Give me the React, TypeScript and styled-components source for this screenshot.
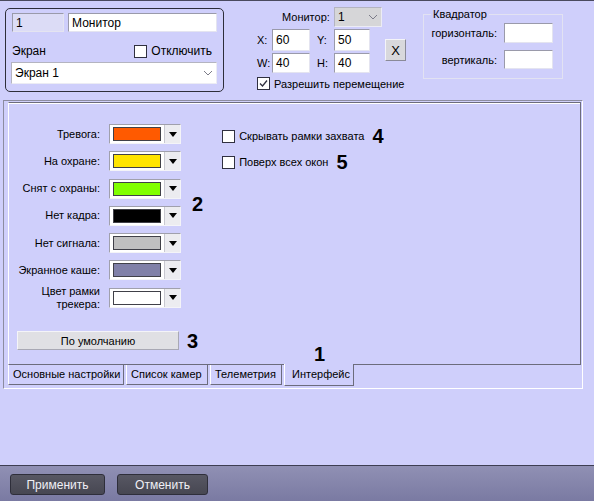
import styled, { createGlobalStyle } from "styled-components";

const GlobalStyle = createGlobalStyle`
  html, body {
    margin: 0;
    padding: 0;
  }
  body {
    font-family: "Liberation Sans", Arial, sans-serif;
    font-size: 11px;
    color: #000;
    background: #cfcffb;
  }
`;

const Screen = styled.div`
  height: 501px;
  display: flex;
  flex-direction: column;
  background: #cfcffb;
  border-top: 1px solid #4a4a5e;
  box-sizing: border-box;
`;

const Header = styled.div`
  height: 99px;
  display: flex;
  align-items: flex-start;
  flex-shrink: 0;
`;

const MonitorGroup = styled.div`
  box-sizing: border-box;
  margin: 7px 0 0 5px;
  width: 219px;
  height: 84px;
  border: 1px solid #2e2e3a;
  border-radius: 5px;
  padding: 4px 6px;
  display: flex;
  flex-direction: column;
`;

const Row = styled.div<{ $gap?: number; $top?: number }>`
  display: flex;
  align-items: center;
  gap: ${(p) => p.$gap ?? 0}px;
  margin-top: ${(p) => p.$top ?? 0}px;
  white-space: nowrap;
`;

const Field = styled.div<{ $w: number; $h?: number; $bg?: string }>`
  box-sizing: border-box;
  width: ${(p) => p.$w}px;
  height: ${(p) => p.$h ?? 20}px;
  background: ${(p) => p.$bg ?? "#fff"};
  border: 1px solid;
  border-color: #9a9aaa #e4e4f0 #e4e4f0 #9a9aaa;
  padding: 0 3px;
  display: flex;
  align-items: center;
  line-height: 1;
  font-size: 12px;
`;

const SelectBox = styled.div<{ $w: number; $h: number; $bg: string }>`
  box-sizing: border-box;
  width: ${(p) => p.$w}px;
  height: ${(p) => p.$h}px;
  background: ${(p) => p.$bg};
  border: 1px solid;
  border-color: #b4b4c0 #ececf4 #ececf4 #b4b4c0;
  display: flex;
  align-items: center;
  justify-content: space-between;
  padding-left: 3px;
  font-size: 12px;
`;

const Chevron = styled.span`
  width: 16px;
  height: 100%;
  display: flex;
  align-items: center;
  justify-content: center;
`;

const Label = styled.span<{ $w?: number; $align?: string }>`
  display: inline-block;
  width: ${(p) => (p.$w ? `${p.$w}px` : "auto")};
  text-align: ${(p) => p.$align ?? "left"};
  white-space: nowrap;
`;

const CheckLine = styled.label`
  display: flex;
  align-items: center;
  gap: 4px;
  white-space: nowrap;
`;

const Box = styled.span`
  box-sizing: border-box;
  width: 13px;
  height: 13px;
  background: #fff;
  border: 1px solid #303040;
  display: inline-flex;
  align-items: center;
  justify-content: center;
`;

const Middle = styled.div`
  margin: 6px 0 0 33px;
  display: flex;
  align-items: flex-start;
`;

const Coords = styled.div`
  width: 125px;
  display: flex;
  flex-direction: column;
`;

const ClearButton = styled.div`
  box-sizing: border-box;
  margin: 32px 0 0 3px;
  width: 21px;
  height: 22px;
  background: #d8d8dc;
  border: 1px solid;
  border-color: #f4f4f8 #8a8a98 #8a8a98 #f4f4f8;
  display: flex;
  align-items: center;
  justify-content: center;
  font-size: 13px;
`;

const Quad = styled.fieldset`
  margin: 6px 0 0 17px;
  width: 140px;
  box-sizing: border-box;
  border: 1px solid #e2e2f2;
  padding: 2px 9px 9px 0;
  display: flex;
  flex-direction: column;
  gap: 7px;

  legend {
    margin-left: 7px;
    padding: 0 2px;
    line-height: 14px;
  }
`;

const Frame = styled.div`
  margin: 0 11px 0 3px;
  height: 289px;
  box-sizing: border-box;
  border: 1px solid;
  border-color: #8c8ca0 #fff #fff #8c8ca0;
  padding: 1px 1px 2px 4px;
  display: flex;
  flex-direction: column;
  flex-shrink: 0;
`;

const TabPage = styled.div`
  position: relative;
  height: 264px;
  box-sizing: border-box;
  border: 1px solid #6c6c7c;
  border-left-color: #fff;
  box-shadow: inset 0 1px 0 #fff;
  display: flex;
  flex-direction: column;
`;

const Upper = styled.div`
  display: flex;
  align-items: flex-start;
  padding-top: 21px;
`;

const ColorGrid = styled.div`
  display: grid;
  grid-template-columns: 91px 72px;
  column-gap: 9px;
  row-gap: 7.3px;
  grid-auto-rows: 20px;
  align-items: center;
`;

const ColorLabel = styled.span`
  text-align: right;
  line-height: 13px;
`;

const Combo = styled.div`
  box-sizing: border-box;
  height: 20px;
  display: flex;
  border: 1px solid;
  border-color: #a0a0ac #f4f4f8 #f4f4f8 #a0a0ac;
  background: #fff;
`;

const Swatch = styled.div<{ $color: string }>`
  flex: 1;
  margin: 2px 3px 2px 3px;
  background: ${(p) => p.$color};
  border: 1px solid #404048;
`;

const ArrowButton = styled.div`
  width: 15px;
  background: #ececf0;
  border-left: 1px solid #c8c8d0;
  display: flex;
  align-items: center;
  justify-content: center;
`;

const Marker = styled.span<{ $left?: number; $top?: number }>`
  font-weight: bold;
  font-size: 20px;
  line-height: 20px;
  margin-left: ${(p) => p.$left ?? 0}px;
  margin-top: ${(p) => p.$top ?? 0}px;
`;

const FloatingMarker = styled(Marker)`
  position: absolute;
  left: 305px;
  top: 241px;
`;

const Options = styled.div`
  margin: 2px 0 0 19px;
  display: flex;
  flex-direction: column;
  gap: 6px;
`;

const OptionRow = styled.div`
  height: 20px;
  display: flex;
  align-items: center;
  gap: 8px;
`;

const DefaultsRow = styled.div`
  display: flex;
  align-items: center;
  gap: 8px;
  margin: 23px 0 0 8px;
`;

const DefaultsButton = styled.div`
  box-sizing: border-box;
  width: 162px;
  height: 19px;
  background: #e0e0e4;
  border: 1px solid;
  border-color: #f4f4f8 #a8a8b4 #a8a8b4 #f4f4f8;
  display: flex;
  align-items: center;
  justify-content: center;
`;

const TabStrip = styled.div`
  display: flex;
  align-items: flex-start;
  gap: 2px;
`;

const Tab = styled.div<{ $w: number; $active?: boolean }>`
  box-sizing: border-box;
  width: ${(p) => p.$w}px;
  height: ${(p) => (p.$active ? 22 : 20)}px;
  margin-top: ${(p) => (p.$active ? -1 : 0)}px;
  padding: ${(p) => (p.$active ? "4px 0 0 7px" : "3px 0 0 4px")};
  border-left: 1px solid #fff;
  border-right: 1px solid #6c6c7c;
  border-bottom: 1px solid #6c6c7c;
  background: #cfcffb;
  white-space: nowrap;
  position: relative;
`;

const Spacer = styled.div`
  flex: 1;
`;

const BottomBar = styled.div`
  height: 36px;
  box-sizing: border-box;
  border-top: 1px solid #3e3e52;
  background: linear-gradient(#9090b4, #7a7aa2);
  display: flex;
  align-items: flex-start;
  gap: 12px;
  padding: 8px 0 0 10px;
  flex-shrink: 0;
`;

const BarButton = styled.div<{ $w: number }>`
  box-sizing: border-box;
  width: ${(p) => p.$w}px;
  height: 21px;
  border: 1px solid #2e2e3a;
  border-radius: 3px;
  background: linear-gradient(#575763, #474752);
  color: #f0f0f6;
  display: flex;
  align-items: center;
  justify-content: center;
  font-size: 12px;
`;

function ChevronIcon() {
  return (
    <svg width="10" height="6" viewBox="0 0 10 6">
      <polyline points="1,1 5,5 9,1" fill="none" stroke="#7c7c88" strokeWidth="1" />
    </svg>
  );
}

function TriangleIcon() {
  return (
    <svg width="8" height="5" viewBox="0 0 8 5">
      <polygon points="0,0 8,0 4,5" fill="#000" />
    </svg>
  );
}

function CheckMark() {
  return (
    <svg width="11" height="11" viewBox="0 0 11 11">
      <polyline points="2,5.5 4.5,8 9,2.5" fill="none" stroke="#303040" strokeWidth="1.3" />
    </svg>
  );
}

const colorRows = [
  { label: "Тревога:", color: "#ff5a00" },
  { label: "На охране:", color: "#ffe400" },
  { label: "Снят с охраны:", color: "#80ff00" },
  { label: "Нет кадра:", color: "#000000" },
  { label: "Нет сигнала:", color: "#c0c0c0" },
  { label: "Экранное каше:", color: "#8080a8" },
  { label: "Цвет рамки трекера:", color: "#ffffff", twoLines: true },
];

const tabs = [
  { title: "Основные настройки", w: 116 },
  { title: "Список камер", w: 82 },
  { title: "Телеметрия", w: 72 },
  { title: "Интерфейс", w: 70 },
];

export default function App() {
  return (
    <>
      <GlobalStyle />
      <Screen>
        <Header>
          <MonitorGroup>
            <Row $gap={4}>
              <Field $w={52} $h={19} $bg="#dcdcf6">1</Field>
              <Field $w={149} $h={19}>Монитор</Field>
            </Row>
            <Row $top={12} style={{ justifyContent: "space-between", paddingRight: 5 }}>
              <span style={{ fontSize: 12 }}>Экран</span>
              <CheckLine style={{ fontSize: 12 }}>
                <Box />
                Отключить
              </CheckLine>
            </Row>
            <Row $top={4} style={{ marginLeft: -1 }}>
              <SelectBox $w={207} $h={22} $bg="#fff">
                Экран 1
                <Chevron>
                  <ChevronIcon />
                </Chevron>
              </SelectBox>
            </Row>
          </MonitorGroup>

          <Middle>
            <Coords>
              <Row style={{ paddingLeft: 25 }} $gap={1}>
                <Label $w={51}>Монитор:</Label>
                <SelectBox $w={48} $h={20} $bg="#d6d6d8">
                  1
                  <Chevron>
                    <ChevronIcon />
                  </Chevron>
                </SelectBox>
              </Row>
              <Row $top={2}>
                <Label $w={15}>X:</Label>
                <Field $w={38} $h={22}>60</Field>
                <Label $w={17} style={{ marginLeft: 7 }}>Y:</Label>
                <Field $w={36} $h={22}>50</Field>
              </Row>
              <Row $top={2}>
                <Label $w={15}>W:</Label>
                <Field $w={38}>40</Field>
                <Label $w={17} style={{ marginLeft: 7 }}>H:</Label>
                <Field $w={36}>40</Field>
              </Row>
              <Row $top={4}>
                <CheckLine>
                  <Box>
                    <CheckMark />
                  </Box>
                  Разрешить перемещение
                </CheckLine>
              </Row>
            </Coords>
            <ClearButton>X</ClearButton>
          </Middle>

          <Quad>
            <legend>Квадратор</legend>
            <Row $gap={7}>
              <Label $w={73} $align="right">горизонталь:</Label>
              <Field $w={49} />
            </Row>
            <Row $gap={7}>
              <Label $w={73} $align="right">вертикаль:</Label>
              <Field $w={49} $h={19} />
            </Row>
          </Quad>
        </Header>

        <Frame>
          <TabPage>
            <Upper>
              <ColorGrid>
                {colorRows.map((r) => (
                  <>
                    <ColorLabel key={r.label}>
                      {r.twoLines ? (
                        <>
                          Цвет рамки
                          <br />
                          трекера:
                        </>
                      ) : (
                        r.label
                      )}
                    </ColorLabel>
                    <Combo key={r.label + "-c"}>
                      <Swatch $color={r.color} />
                      <ArrowButton>
                        <TriangleIcon />
                      </ArrowButton>
                    </Combo>
                  </>
                ))}
              </ColorGrid>
              <Marker $left={11} $top={70}>2</Marker>
              <Options>
                <OptionRow>
                  <CheckLine>
                    <Box />
                    Скрывать рамки захвата
                  </CheckLine>
                  <Marker>4</Marker>
                </OptionRow>
                <OptionRow>
                  <CheckLine>
                    <Box />
                    Поверх всех окон
                  </CheckLine>
                  <Marker>5</Marker>
                </OptionRow>
              </Options>
            </Upper>
            <DefaultsRow>
              <DefaultsButton>По умолчанию</DefaultsButton>
              <Marker>3</Marker>
            </DefaultsRow>
            <FloatingMarker>1</FloatingMarker>
          </TabPage>
          <TabStrip>
            {tabs.map((t, i) => (
              <Tab key={t.title} $w={t.w} $active={i === tabs.length - 1}>
                {t.title}
              </Tab>
            ))}
          </TabStrip>
        </Frame>

        <Spacer />

        <BottomBar>
          <BarButton $w={95}>Применить</BarButton>
          <BarButton $w={91}>Отменить</BarButton>
        </BottomBar>
      </Screen>
    </>
  );
}
